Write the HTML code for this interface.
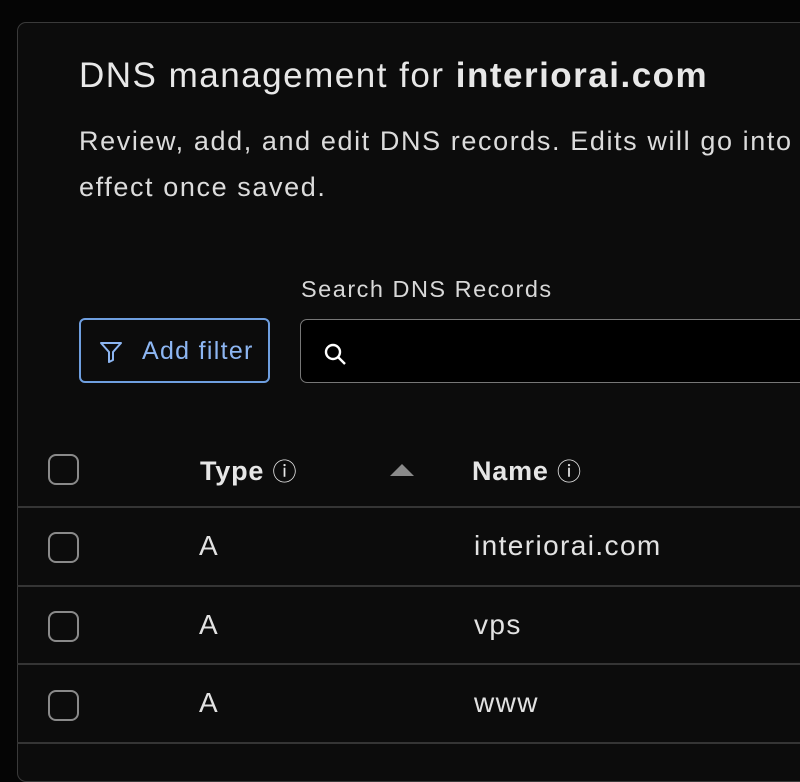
<!DOCTYPE html>
<html><head><style>
*{margin:0;padding:0;box-sizing:border-box}
body{width:800px;height:749px;overflow:hidden;background:#050505;font-family:"Liberation Sans",sans-serif;color:#e6e6e6;position:relative}
.card{position:absolute;left:17px;top:22px;width:820px;height:760px;background:#0c0c0c;border:1.5px solid #3a3a3a;border-radius:9px}
.abs{position:absolute;white-space:nowrap}
.h1{left:79px;top:56px;font-size:35px;letter-spacing:1.5px;color:#e8e8e8}
.p{left:79px;top:118px;font-size:27px;letter-spacing:1.6px;line-height:46px;color:#dcdcdc}
.lbl{left:301px;top:276px;font-size:23.5px;letter-spacing:1.5px;color:#d8d8d8}
.btn{left:79px;top:318px;width:191px;height:65px;border:2px solid #6f9fe0;border-radius:6px;color:#8db6f2;font-size:25px;letter-spacing:1.3px}
.inp{left:300px;top:319px;width:560px;height:64px;border:1.5px solid #777;border-radius:7px;background:#000}
.cb{position:absolute;left:48px;width:31px;height:31px;border:2px solid #8a8a8a;border-radius:8px}
.line{position:absolute;left:17px;width:800px;height:2px;background:#353535}
.cell{position:absolute;font-size:28px;letter-spacing:1.4px;color:#e2e2e2}
.hd{font-weight:bold;font-size:27px;letter-spacing:0.8px;color:#e6e6e6}
</style></head><body>
<div class="card"></div>
<div class="abs h1">DNS management for <b>interiorai.com</b></div>
<div class="abs p">Review, add, and edit DNS records. Edits will go into<br>effect once saved.</div>
<div class="abs lbl">Search DNS Records</div>
<div class="abs btn">
<svg style="position:absolute;left:18px;top:20px" width="24" height="24" viewBox="0 0 24 24" fill="none" stroke="#8db6f2" stroke-width="2" stroke-linejoin="round"><path d="M2 3h20l-8 9v8l-4 2v-10z"/></svg>
<span style="position:absolute;left:61px;top:17px">Add filter</span></div>
<div class="abs inp"><svg style="position:absolute;left:21px;top:21px" width="28" height="28" viewBox="0 0 28 28" fill="none" stroke="#fff" stroke-width="2.4"><circle cx="11" cy="11" r="7"/><path d="M16 16l7 7"/></svg></div>

<div class="cb" style="top:454px"></div>
<div class="cell hd" style="left:200px;top:452px">Type <span style="font-weight:normal;font-size:24px">ⓘ</span></div>
<svg class="abs" style="left:388px;top:462px" width="28" height="16"><path d="M2 14L14 2L26 14Z" fill="#8a8a8a"/></svg>
<div class="cell hd" style="left:472px;top:452px">Name <span style="font-weight:normal;font-size:24px">ⓘ</span></div>
<div class="line" style="top:506px"></div>

<div class="cb" style="top:532px"></div>
<div class="cell" style="left:199px;top:530px">A</div>
<div class="cell" style="left:474px;top:530px">interiorai.com</div>
<div class="line" style="top:585px"></div>

<div class="cb" style="top:611px"></div>
<div class="cell" style="left:199px;top:609px">A</div>
<div class="cell" style="left:474px;top:609px">vps</div>
<div class="line" style="top:663px"></div>

<div class="cb" style="top:690px"></div>
<div class="cell" style="left:199px;top:687px">A</div>
<div class="cell" style="left:474px;top:687px">www</div>
<div class="line" style="top:742px"></div>
</body></html>
